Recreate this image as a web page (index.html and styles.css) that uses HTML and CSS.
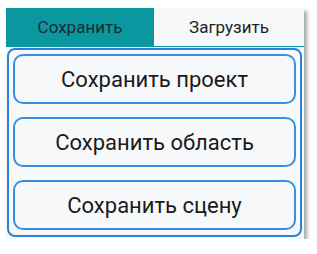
FILE: index.html
```html
<!DOCTYPE html>
<html lang="ru">
<head>
  <meta charset="UTF-8">
  <title>Сохранить</title>
  <link rel="stylesheet" href="styles.css">
</head>
<body>
  <div class="window">
    <div class="tabs">
      <div class="tab active">Сохранить</div>
      <div class="tab">Загрузить</div>
    </div>
    <div class="panel">
      <button class="action">Сохранить проект</button>
      <button class="action">Сохранить область</button>
      <button class="action">Сохранить сцену</button>
    </div>
  </div>
</body>
</html>
```

FILE: styles.css
```css
body {
  margin: 0;
  padding: 8px 0 0 6px;
  background: #ffffff;
  font-family: Roboto, "Noto Sans", sans-serif;
}

.window {
  width: 298px;
  background: #f7f8fa;
  box-shadow: 3px 3px 4px rgba(0, 0, 0, 0.35);
  padding-bottom: 2px;
}

.tabs {
  display: grid;
  grid-template-columns: 148px 1fr;
  height: 38px;
  border-bottom: 1px solid #0a97a0;
}

.tab {
  display: flex;
  align-items: center;
  justify-content: center;
  font-size: 17px;
  color: #1f1f1f;
  background: #f7f8fa;
}

.tab.active {
  background: #0a97a0;
  color: #1b2a30;
}

.panel {
  margin: 1px 2px 0 1px;
  border: 2px solid #2b80d9;
  border-radius: 8px;
  padding: 4px 4px 5px 4px;
  display: flex;
  flex-direction: column;
  gap: 13px;
}

.action {
  height: 50px;
  border: 2px solid #3a8ee2;
  border-radius: 10px;
  background: #f7f8fa;
  font-family: Roboto, "Noto Sans", sans-serif;
  font-size: 22px;
  color: #1a1a1a;
  cursor: pointer;
}
```
